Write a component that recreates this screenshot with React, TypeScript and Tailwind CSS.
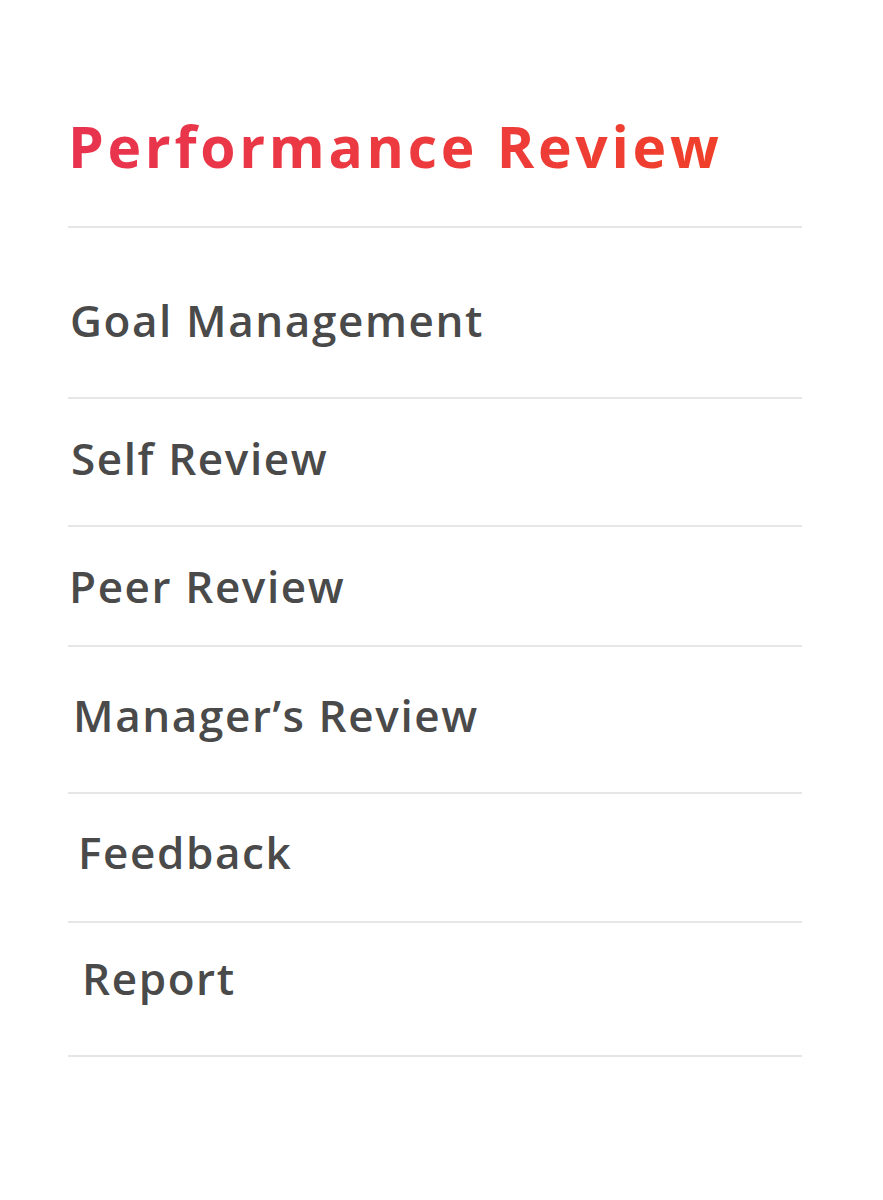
const items = [
  { label: 'Goal Management', row: 'h-[171px] pt-[67px] pl-[2px]' },
  { label: 'Self Review', row: 'h-[128px] pt-[34px] pl-[3px]' },
  { label: 'Peer Review', row: 'h-[120px] pt-[34px] pl-[1px]' },
  { label: 'Manager’s Review', row: 'h-[147px] pt-[43px] pl-[5px]' },
  { label: 'Feedback', row: 'h-[129px] pt-[33px] pl-[10px]' },
  { label: 'Report', row: 'h-[134px] pt-[30px] pl-[14px]' },
];

export default function App() {
  return (
    <div className="min-h-[1200px] bg-white font-['Open_Sans',sans-serif]">
      <div className="ml-[68px] w-[734px] pt-[111px]">
        <h1 className="h-[115px] text-[57px] font-bold leading-[70px] tracking-[3.7px] bg-gradient-to-r from-[#e8334f] to-[#f0402a] bg-clip-text text-transparent w-fit">
          Performance Review
        </h1>
        <ul className="border-t-2 border-[#e6e6e6]">
          {items.map((item) => (
            <li
              key={item.label}
              className={`border-b-2 border-[#e6e6e6] ${item.row}`}
            >
              <span className="text-[44px] font-semibold leading-[50px] tracking-[1.6px] text-[#4a4a4a]">
                {item.label}
              </span>
            </li>
          ))}
        </ul>
      </div>
    </div>
  );
}
